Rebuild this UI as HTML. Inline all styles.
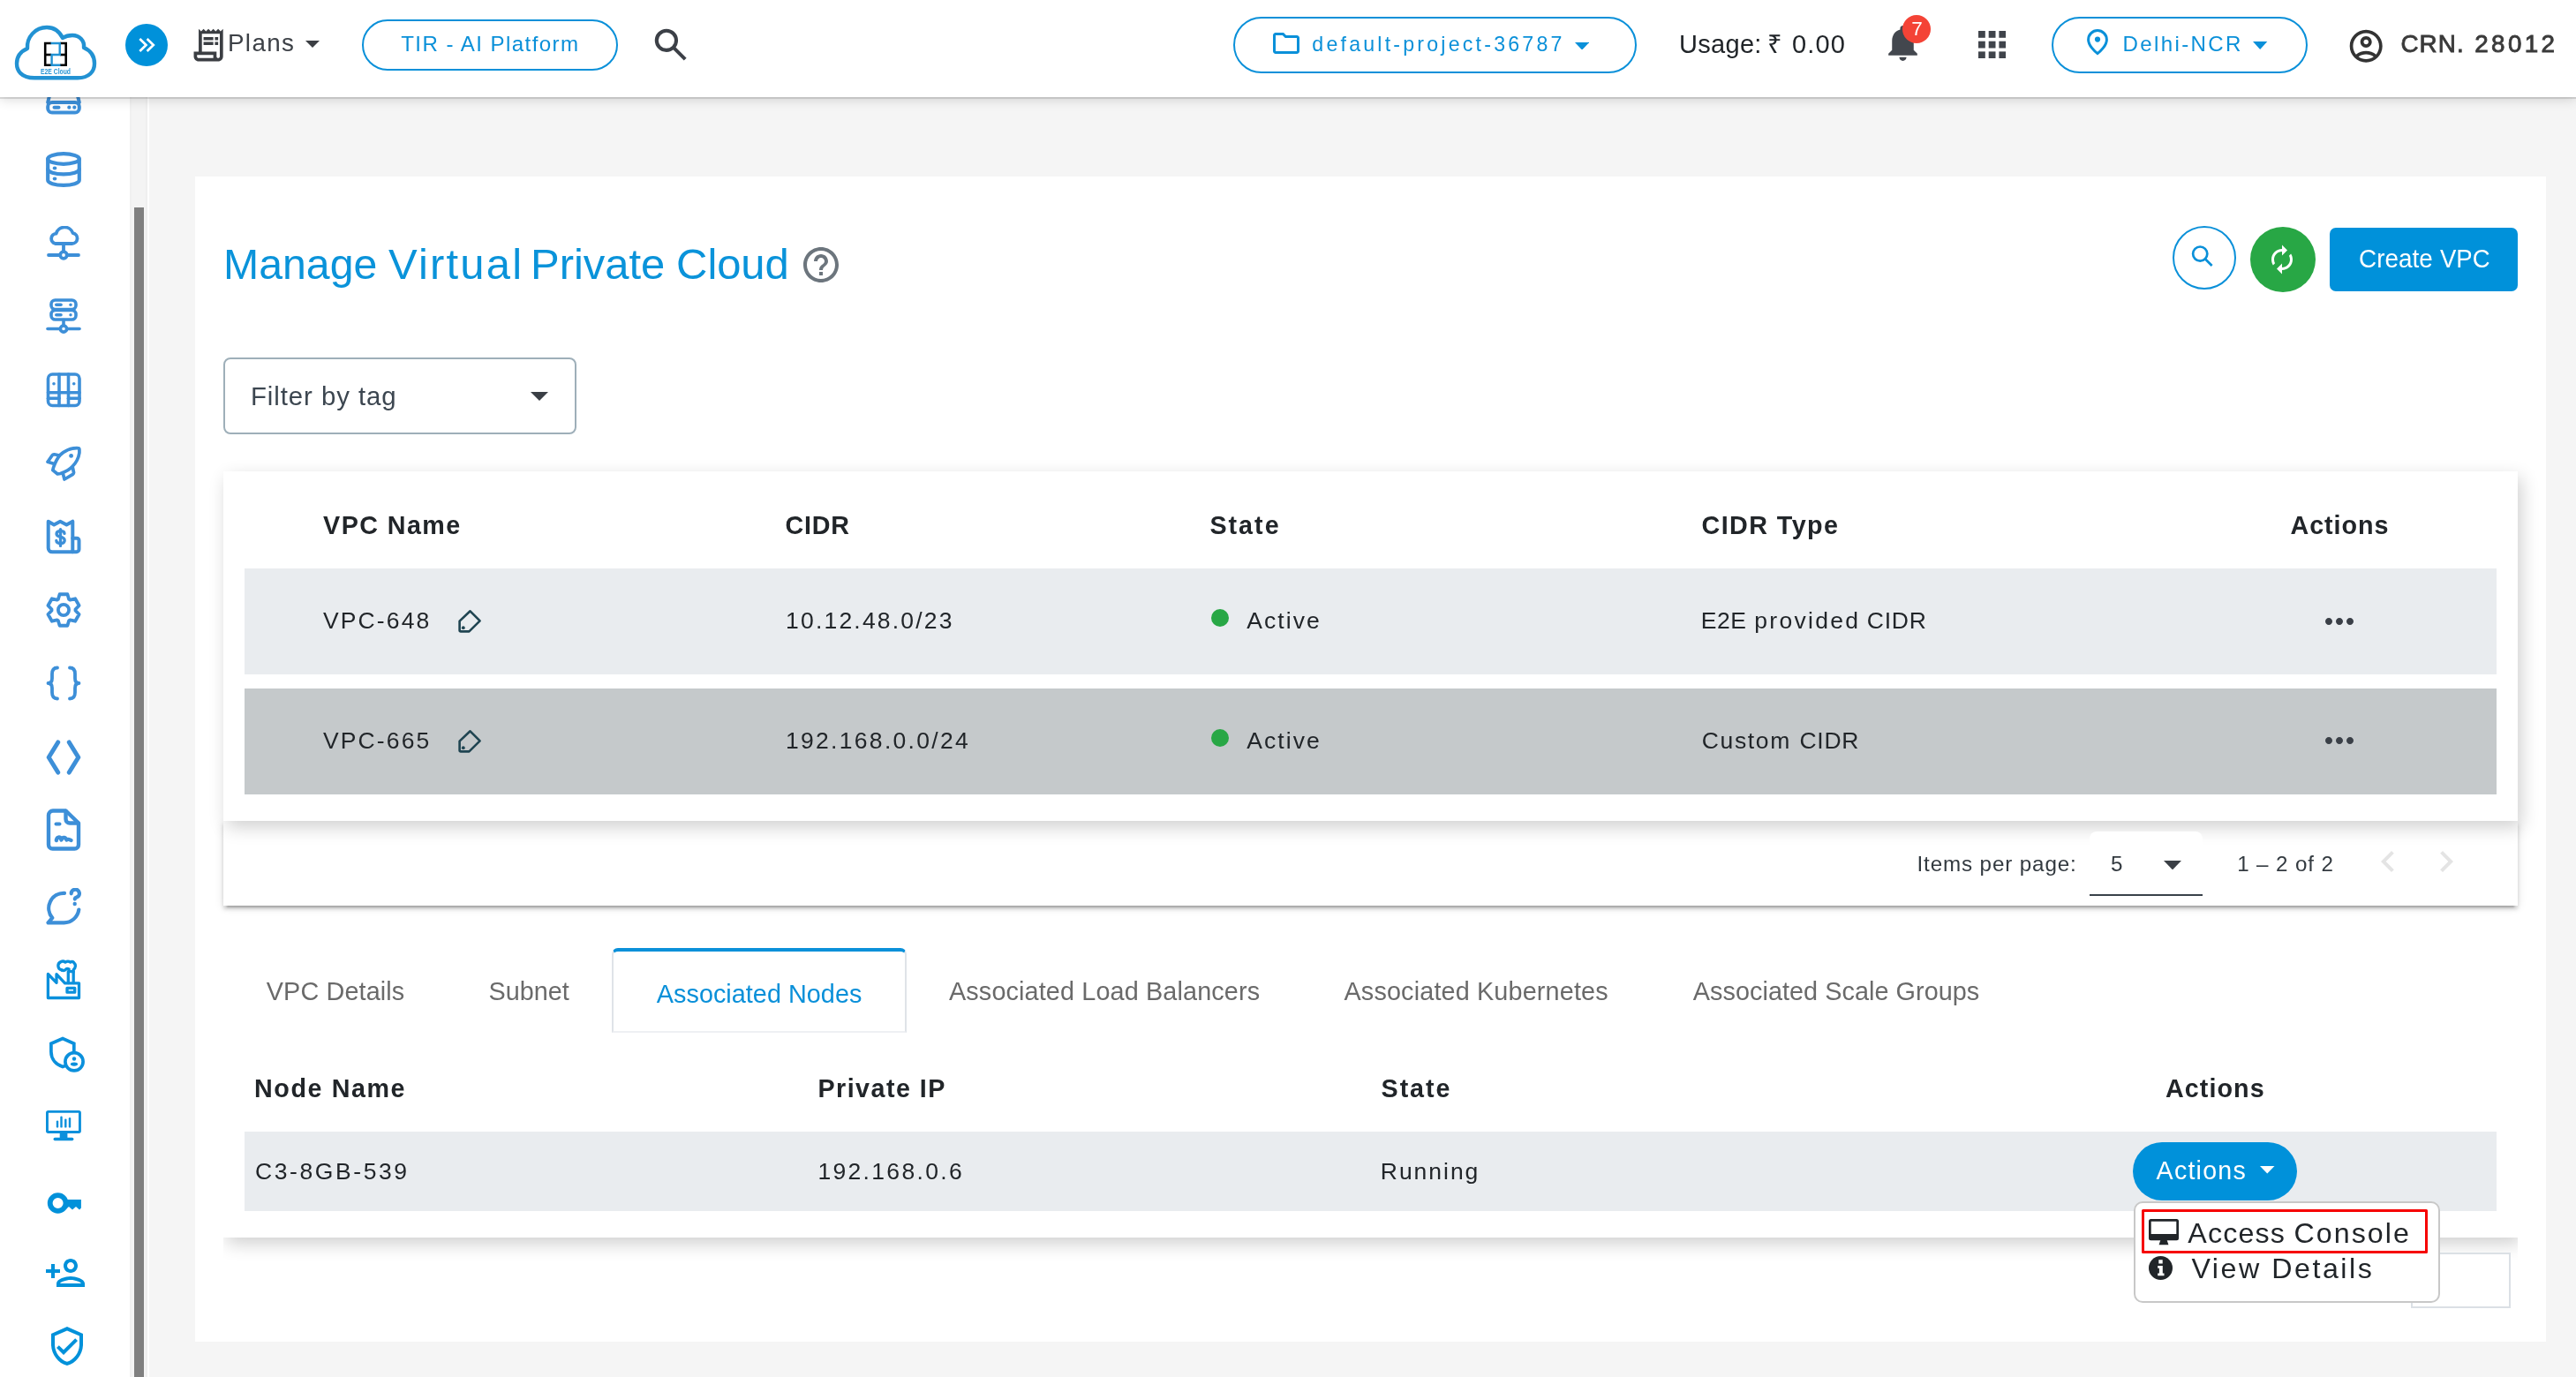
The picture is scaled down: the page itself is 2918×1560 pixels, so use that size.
<!DOCTYPE html>
<html><head><meta charset="utf-8"><title>Manage Virtual Private Cloud</title>
<style>
html,body{margin:0;padding:0}
body{width:2918px;height:1560px;overflow:hidden;position:relative;background:#f5f5f5;
 font-family:"Liberation Sans",sans-serif;}
div,svg{box-sizing:border-box}
#root{position:absolute;left:0;top:0;width:2918px;height:1560px;overflow:hidden;transform:translateZ(0)}
.a{position:absolute}
.t{position:absolute;line-height:1;white-space:pre}
.pill{position:absolute;border:2.2px solid #0a90d9;border-radius:40px;background:#fff}
.row{position:absolute;left:277px;width:2551px}
.card{position:absolute;left:253px;width:2599px;background:#fff}
</style></head>
<body>
<div id="root">
<div class="a" style="left:0px;top:110px;width:147px;height:1450px;background:#fff"></div>
<div class="a" style="left:147px;top:110px;width:20px;height:1450px;background:#f4f4f4;border-left:2px solid #f0f0f0;border-right:2px solid #efefef"></div>
<div class="a" style="left:167px;top:110px;width:2.3px;height:1450px;background:#fff"></div>
<div class="a" style="left:151.5px;top:235px;width:11.5px;height:1325px;background:#808080"></div>
<svg style="position:absolute;left:52px;top:89.5px;color:#3d8fd8;" width="40" height="40" viewBox="0 0 40 40"><g fill="none" stroke="currentColor" stroke-width="4" stroke-linecap="round" stroke-linejoin="round"><path d="M8 2 L2.2 26"/><path d="M32 2 L37.8 26"/><rect x="2.2" y="26" width="35.600" height="11.500" rx="4.800"/><path d="M9.500 31.700H14.500" stroke-width="4"/></g><circle cx="26.300" cy="31.700" r="2.100" fill="currentColor"/><circle cx="32.300" cy="31.700" r="2.100" fill="currentColor"/></svg>
<svg style="position:absolute;left:52px;top:172px;color:#3d8fd8;" width="40" height="40" viewBox="0 0 40 40"><g fill="none" stroke="currentColor" stroke-width="4.2" stroke-linecap="round" stroke-linejoin="round"><ellipse cx="20" cy="8" rx="17.800" ry="5.800"/><path d="M2.200 8V32C2.200 35.300 10 37.800 20 37.800S37.800 35.300 37.800 32V8"/><path d="M2.200 19.500C2.200 22.800 10 25.300 20 25.300S37.800 22.800 37.800 19.500"/></g><ellipse cx="10" cy="18.500" rx="2.300" ry="1.900" fill="currentColor"/><ellipse cx="10" cy="30.500" rx="2.300" ry="1.900" fill="currentColor"/></svg>
<svg style="position:absolute;left:52px;top:255.5px;color:#3d8fd8;" width="40" height="40" viewBox="0 0 40 40"><g fill="none" stroke="currentColor" stroke-width="3.8" stroke-linecap="round" stroke-linejoin="round"><path d="M10.500 20H29.500A6 6 0 0 0 30.600 8.100A10 10 0 0 0 11.600 8.600A5.800 5.800 0 0 0 10.500 20Z"/><path d="M20 20V28.500"/><circle cx="20" cy="33" r="3.800"/><path d="M3 33H15.500"/><path d="M24.500 33H37"/></g></svg>
<svg style="position:absolute;left:52px;top:338px;color:#3d8fd8;" width="40" height="40" viewBox="0 0 40 40"><g fill="none" stroke="currentColor" stroke-width="3.6" stroke-linecap="round" stroke-linejoin="round"><rect x="6" y="2" width="28" height="10.500" rx="4.500"/><rect x="6" y="13.500" width="28" height="10.500" rx="4.500"/><path d="M11.800 7.200H17" stroke-width="3.600"/><path d="M11.800 18.800H17" stroke-width="3.600"/><path d="M20 24.500V30"/><circle cx="20" cy="34.500" r="3.600"/><path d="M2 34.500H16"/><path d="M24 34.500H38"/></g><circle cx="28" cy="7.200" r="1.700" fill="currentColor"/><circle cx="28" cy="18.800" r="1.700" fill="currentColor"/></svg>
<svg style="position:absolute;left:51.9px;top:422px;color:#3d8fd8;" width="40" height="40" viewBox="0 0 40 40"><g fill="none" stroke="currentColor" stroke-width="3.6" stroke-linecap="round" stroke-linejoin="round"><rect x="2.500" y="2" width="35.500" height="35.500" rx="5"/><path d="M15 2V37.500"/><path d="M25.500 2V37.500"/><path d="M2.500 22.800H38"/><path d="M2.500 29.300H15"/><path d="M25.500 29.300H38"/></g><circle cx="9" cy="12.700" r="1.800" fill="currentColor"/><circle cx="31.700" cy="12.700" r="1.800" fill="currentColor"/></svg>
<svg style="position:absolute;left:52px;top:505px;color:#3d8fd8;" width="40" height="40" viewBox="0 0 40 40"><g fill="none" stroke="currentColor" stroke-width="3.7" stroke-linecap="round" stroke-linejoin="round"><path d="M36 2.600C28 2.200 21 6 16 10.500C13 14 10.500 19 8.600 24.500L7.800 27.600L13.200 32L16.500 31.500C22 29.500 27 27 30 23.500C34 19.500 37 14 37.900 8L37.900 4.500Q37.900 2.600 36 2.600Z"/><path d="M15.500 11L9.500 9.800Q8 9.600 7.200 10.800L2 18.200L9.500 20.500"/><path d="M30.300 24.500L31.500 30Q31.800 31.500 30.500 32.300L21 38L19.200 31"/></g><circle cx="28.600" cy="11.400" r="2.400" fill="currentColor"/></svg>
<svg style="position:absolute;left:52px;top:587.5px;color:#3d8fd8;" width="40" height="40" viewBox="0 0 40 40"><g fill="none" stroke="currentColor" stroke-width="4" stroke-linecap="round" stroke-linejoin="round"><path d="M2.700 2.700L9.200 6.500L16.200 2.700L23.400 6.500L30.300 2.700V37.300H7A4.300 4.300 0 0 1 2.700 33Z"/><path d="M30.300 21.800H35A2.500 2.500 0 0 1 37.500 24.300V34.300A3 3 0 0 1 34.500 37.300H30"/></g><g fill="none" stroke="currentColor" stroke-width="3.3" stroke-linecap="round" stroke-linejoin="round"><path d="M16.500 11.600V30.400"/><path d="M21 16.400C21 14.400 19 13.600 16.500 13.600S12 14.700 12 16.900S14.200 19.600 16.500 20.200S21.200 21.700 21.200 24.200S19.100 27.500 16.500 27.500S11.800 26.500 11.800 24.500"/></g></svg>
<svg style="position:absolute;left:52.1px;top:671.2px;color:#3d8fd8;" width="40" height="40" viewBox="0 0 40 40"><g fill="none" stroke="currentColor" stroke-width="3.8" stroke-linecap="round" stroke-linejoin="round"><path d="M26.13 7.97 L24.43 2.24 L15.57 2.24 L13.87 7.97 L12.65 8.68 L6.84 7.29 L2.41 14.96 L6.52 19.29 L6.52 20.71 L2.41 25.04 L6.84 32.71 L12.65 31.32 L13.87 32.03 L15.57 37.76 L24.43 37.76 L26.13 32.03 L27.35 31.32 L33.16 32.71 L37.59 25.04 L33.48 20.71 L33.48 19.29 L37.59 14.96 L33.16 7.29 L27.35 8.68Z"/><circle cx="20" cy="20" r="6.100"/></g></svg>
<svg style="position:absolute;left:52.2px;top:753.5px;color:#3d8fd8;" width="40" height="40" viewBox="0 0 40 40"><g fill="none" stroke="currentColor" stroke-width="3.8" stroke-linecap="round" stroke-linejoin="round"><path d="M13 2.500C8.800 2.500 7 4.800 7 9.500V14.500C7 18 5.500 20 2.500 20C5.500 20 7 22 7 25.500V30.500C7 35.200 8.800 37.500 13 37.500"/><path d="M27 2.500C31.200 2.500 33 4.800 33 9.500V14.500C33 18 34.500 20 37.500 20C34.500 20 33 22 33 25.500V30.500C33 35.200 31.200 37.500 27 37.500"/></g></svg>
<svg style="position:absolute;left:52.4px;top:838.3px;color:#3d8fd8;" width="40" height="40" viewBox="0 0 40 40"><g fill="none" stroke="currentColor" stroke-width="5" stroke-linecap="round" stroke-linejoin="round"><path d="M13.700 3L3.200 20L13.700 37"/><path d="M26.300 3L36.800 20L26.300 37"/></g></svg>
<svg style="position:absolute;left:52px;top:916.2px;color:#3d8fd8;" width="40" height="48" viewBox="0 0 40 48"><g fill="none" stroke="currentColor" stroke-width="4.4" stroke-linecap="round" stroke-linejoin="round"><path d="M8 2.500H22.500L37 16.500V41A4.500 4.500 0 0 1 32.500 45.500H7.500A4.500 4.500 0 0 1 3 41V7.500A5 5 0 0 1 8 2.500Z"/><path d="M22.500 3V12A4.500 4.500 0 0 0 27 16.500H36.500"/><path d="M11.500 17.500H15.500" stroke-width="4"/><path d="M11.800 36C12.500 32 16 31 17.500 35.500C19 31.500 22 32.500 23.500 35.500C25 34.500 27 35 28.500 36"/></g></svg>
<svg style="position:absolute;left:52px;top:1006px;color:#3d8fd8;" width="40" height="42" viewBox="0 0 40 42"><g fill="none" stroke="currentColor" stroke-width="4.2" stroke-linecap="round" stroke-linejoin="round"><path d="M21 5.800A17 17 0 0 0 7.300 33.800L2.500 39.300H20A17 17 0 0 0 37.300 24.500"/><path d="M28.700 6.300A4.600 4.600 0 1 1 34.800 10.600C33.300 11.100 32.800 11.800 32.800 12.600"/></g><circle cx="32.700" cy="18" r="2.200" fill="currentColor"/></svg>
<svg style="position:absolute;left:52px;top:1087px;color:#0b90dc;" width="40" height="46" viewBox="0 0 40 46"><g fill="none" stroke="currentColor" stroke-width="3.3" stroke-linecap="round" stroke-linejoin="round"><path d="M2.400 43.500V16.500L12 26.300V16.700L21.500 26.800H37.500V43.500Z"/><path d="M25.300 26.500V13.700H31.200V26.500"/><rect x="24" y="32.400" width="8.700" height="4.800"/><path d="M18 12A4.900 4.900 0 0 1 17 2.600Q19.500 1.200 22 3.100Q25 1.200 27.800 3.100Q30 1.300 31.800 3.700A5 5 0 0 1 31.200 11.500V14"/><path d="M18 12Q20.500 13.300 22.500 11.300Q24 9.900 26.200 11"/></g></svg>
<svg style="position:absolute;left:54px;top:1173.5px;color:#0b90dc;" width="42" height="42" viewBox="0 0 42 42"><g fill="none" stroke="currentColor" stroke-width="3.7" stroke-linecap="butt" stroke-linejoin="miter"><path d="M29.800 17.500V8.300L17 2.500L3.900 8.300V17.500C3.900 26 9.500 32 17 34.500C18.300 34.100 19.500 33.600 20.500 33"/><circle cx="30" cy="28.800" r="10.100"/></g><circle cx="30" cy="25.500" r="2.200" fill="currentColor"/><ellipse cx="30" cy="31.600" rx="4.100" ry="2.100" fill="currentColor"/></svg>
<svg style="position:absolute;left:52px;top:1256px;color:#0b90dc;" width="40" height="40" viewBox="0 0 40 40"><g fill="none" stroke="currentColor" stroke-width="2.9" stroke-linecap="butt" stroke-linejoin="round"><rect x="1.450" y="3.350" width="37" height="23.200" rx="1.300"/></g><path d="M15.700 27.500H24.400V33H15.700Z" fill="currentColor"/><rect x="8.500" y="32.700" width="22.900" height="3.500" rx="1.700" fill="currentColor"/><g fill="none" stroke="currentColor" stroke-width="2.4" stroke-linecap="round" stroke-linejoin="round"><path d="M13 14.600V20.400"/><path d="M17.500 9.800V20.400"/><path d="M22.300 12.600V20.400"/><path d="M27 11.300V20.400"/></g></svg>
<svg style="position:absolute;left:44px;top:1335px;color:#0091da;" width="60" height="55" viewBox="0 0 60 55"><path fill="currentColor" fill-rule="evenodd" d="M21.600 16.200A11.800 11.800 0 1 0 21.600 39.800A11.800 11.800 0 1 0 21.600 16.200ZM21.600 22A6 6 0 1 1 21.600 34A6 6 0 1 1 21.600 22Z"/><path fill="currentColor" d="M31 24H47.900V33.500L46 35.600L42 32L38 35.600L34 32L31 34.500Z"/></svg>
<svg style="position:absolute;left:49.8px;top:1418.1px;color:#0091da;" width="48" height="48" viewBox="0 0 24 24"><path fill="currentColor" d="M15 12c2.21 0 4-1.79 4-4s-1.79-4-4-4-4 1.79-4 4 1.79 4 4 4zm0-6c1.1 0 2 .9 2 2s-.9 2-2 2-2-.9-2-2 .9-2 2-2zm0 8c-2.67 0-8 1.34-8 4v2h16v-2c0-2.66-5.33-4-8-4zm-6 4c.22-.72 3.31-2 6-2 2.7 0 5.8 1.29 6 2H9zm-3-3v-3h3v-2H6V7H4v3H1v2h3v3z"/></svg>
<svg style="position:absolute;left:51.6px;top:1501.3px;color:#0091da;" width="48" height="48" viewBox="0 0 24 24"><path fill="currentColor" d="M12 1L3 5v6c0 5.55 3.84 10.74 9 12 5.16-1.26 9-6.45 9-12V5l-9-4zm7 10c0 4.52-2.98 8.69-7 9.93-4.02-1.24-7-5.41-7-9.93V6.3l7-3.11 7 3.11V11zm-11.59.59L6 13l4 4 8-8-1.41-1.42L10 14.17z"/></svg>
<div class="a" style="left:221px;top:200px;width:2663px;height:1320px;background:#fff"></div>
<svg style="position:absolute;left:906.4px;top:276.2px;color:#6c757d;" width="48" height="48" viewBox="0 0 24 24"><path fill="currentColor" d="M11 18h2v-2h-2v2zm1-16C6.48 2 2 6.48 2 12s4.48 10 10 10 10-4.48 10-10S17.52 2 12 2zm0 18c-4.41 0-8-3.59-8-8s3.59-8 8-8 8 3.59 8 8-3.59 8-8 8zm0-14c-2.21 0-4 1.79-4 4h2c0-1.1.9-2 2-2s2 .9 2 2c0 2-3 1.75-3 5h2c0-2.25 3-2.5 3-5 0-2.21-1.79-4-4-4z"/></svg>
<div class="a" style="left:253px;top:405px;width:399.5px;height:86.5px;border:2px solid #9eafb9;border-radius:8px;background:#fff"></div>
<svg style="position:absolute;left:601px;top:443.7px;" width="20" height="10" viewBox="0 0 20 10"><path fill="#3a3f45" d="M0 0H20L10.0 10Z"/></svg>
<div class="a" style="left:2461px;top:256px;width:72px;height:72px;border:2px solid #0a90d9;border-radius:50%;background:#fff"></div>
<svg style="position:absolute;left:2470px;top:270px;color:#0a90d9;" width="50" height="40" viewBox="0 0 50 40"><g fill="none" stroke="currentColor" stroke-width="2.7" stroke-linecap="butt" stroke-linejoin="round"><circle cx="22.200" cy="17.600" r="8.100"/><path d="M28.100 23.500L35.600 31"/></g></svg>
<div class="a" style="left:2549px;top:257px;width:74px;height:74px;border-radius:50%;background:#28a745"></div>
<svg style="position:absolute;left:2567.3px;top:276.2px;color:#fff;" width="36" height="36" viewBox="0 0 24 24"><path fill="currentColor" d="M12 6v3l4-4-4-4v3c-4.42 0-8 3.58-8 8 0 1.57.46 3.03 1.24 4.26L6.7 14.8c-.45-.83-.7-1.79-.7-2.8 0-3.31 2.69-6 6-6zm6.76 1.74L17.3 9.2c.44.84.7 1.79.7 2.8 0 3.31-2.69 6-6 6v-3l-4 4 4 4v-3c4.42 0 8-3.58 8-8 0-1.57-.46-3.03-1.24-4.26z"/></svg>
<div class="a" style="left:2639px;top:258px;width:213px;height:72px;border-radius:7px;background:#0091da"></div>
<div class="a" style="left:253px;top:930px;width:2599px;height:96px;background:#fff;box-shadow:0 6px 2px -4px rgba(0,0,0,.2),0 4px 4px 0 rgba(0,0,0,.14),0 2px 10px 0 rgba(0,0,0,.12)"></div>
<div class="card" style="top:534px;height:396px;box-shadow:4px 7px 19px rgba(0,0,0,.19)"></div>
<div class="row" style="top:644px;height:120px;background:#e9ecef"></div>
<div class="row" style="top:780px;height:120px;background:#c5c9cb"></div>
<div class="a" style="left:1372.3px;top:690px;width:20px;height:20px;border-radius:50%;background:#28a745"></div>
<div class="a" style="left:1372.3px;top:826px;width:20px;height:20px;border-radius:50%;background:#28a745"></div>
<svg style="position:absolute;left:2626.4px;top:679.8px;color:#3a3f47;" width="48" height="48" viewBox="0 0 24 24"><path fill="currentColor" d="M6 10c-1.1 0-2 .9-2 2s.9 2 2 2 2-.9 2-2-.9-2-2-2zm12 0c-1.1 0-2 .9-2 2s.9 2 2 2 2-.9 2-2-.9-2-2-2zm-6 0c-1.1 0-2 .9-2 2s.9 2 2 2 2-.9 2-2-.9-2-2-2z"/></svg>
<svg style="position:absolute;left:2626.4px;top:815.3px;color:#3a3f47;" width="48" height="48" viewBox="0 0 24 24"><path fill="currentColor" d="M6 10c-1.1 0-2 .9-2 2s.9 2 2 2 2-.9 2-2-.9-2-2-2zm12 0c-1.1 0-2 .9-2 2s.9 2 2 2 2-.9 2-2-.9-2-2-2zm-6 0c-1.1 0-2 .9-2 2s.9 2 2 2 2-.9 2-2-.9-2-2-2z"/></svg>
<svg style="position:absolute;left:517.6px;top:690px;color:#1f4451;" width="28" height="28" viewBox="0 0 28 28"><path d="M2.6 24.2V13.6L14.6 2.3L25.6 13.3L13.4 25.4H3.8C3.1 25.4 2.6 24.9 2.6 24.2Z" fill="none" stroke="currentColor" stroke-width="2.6" stroke-linejoin="round"/><circle cx="6.800" cy="21.200" r="1.900" fill="currentColor"/></svg>
<svg style="position:absolute;left:517.6px;top:826px;color:#1f4451;" width="28" height="28" viewBox="0 0 28 28"><path d="M2.6 24.2V13.6L14.6 2.3L25.6 13.3L13.4 25.4H3.8C3.1 25.4 2.6 24.9 2.6 24.2Z" fill="none" stroke="currentColor" stroke-width="2.6" stroke-linejoin="round"/><circle cx="6.800" cy="21.200" r="1.900" fill="currentColor"/></svg>
<div class="a" style="left:2367px;top:942px;width:128px;height:72.5px;background:#fff;border-radius:8px 8px 0 0;border-bottom:2px solid #39424a"></div>
<svg style="position:absolute;left:2451.3px;top:974.7px;" width="20" height="10.4" viewBox="0 0 20 10.4"><path fill="#3a3f45" d="M0 0H20L10.0 10.4Z"/></svg>
<svg style="position:absolute;left:2681px;top:952px;color:#e4e4e4;" width="48" height="48" viewBox="0 0 24 24"><path fill="currentColor" d="M15.41 7.41L14 6l-6 6 6 6 1.41-1.41L10.83 12z"/></svg>
<svg style="position:absolute;left:2746.5px;top:952px;color:#e4e4e4;" width="48" height="48" viewBox="0 0 24 24"><path fill="currentColor" d="M10 6L8.59 7.41 13.17 12l-4.58 4.59L10 18l6-6z"/></svg>
<div class="a" style="left:693.3px;top:1073.7px;width:333.6px;height:96.2px;border:2px solid #dfe3e8;border-bottom:2px solid #eef0f3;border-top:4.300px solid #0a90d9;border-radius:7px 7px 0 0;background:#fff"></div>
<div class="a" style="left:253px;top:1180px;width:2599px;height:280px;overflow:hidden"><div class="a" style="left:0;top:0;width:2599px;height:222px;background:#fff;box-shadow:4px 7px 19px rgba(0,0,0,.19)"></div></div>
<div class="row" style="top:1282px;height:89.700px;background:#e9ecef"></div>
<div class="a" style="left:2731px;top:1418.5px;width:113px;height:63px;border:2px solid #dbe0e5;background:#fff"></div>
<div class="a" style="left:2416px;top:1294px;width:186px;height:66px;border-radius:33px;background:#0091da"></div>
<svg style="position:absolute;left:2560px;top:1321.2px;" width="16.5" height="8.4" viewBox="0 0 16.5 8.4"><path fill="#fff" d="M0 0H16.5L8.25 8.4Z"/></svg>
<div class="a" style="left:2416.5px;top:1360.5px;width:347px;height:115px;border:2px solid #c8c8c8;border-radius:10px;background:#fff"></div>
<div class="a" style="left:2426.2px;top:1370.4px;width:324px;height:49.2px;border:3.600px solid #f60000;border-radius:1.5px"></div>
<svg style="position:absolute;left:2434px;top:1380.8px;color:#212529;" width="34" height="30" viewBox="0 0 34 30"><path fill="currentColor" fill-rule="evenodd" d="M2.500 0H31.500A2.500 2.500 0 0 1 34 2.500V21.700A2.500 2.500 0 0 1 31.500 24.200H2.500A2.500 2.500 0 0 1 0 21.700V2.500A2.500 2.500 0 0 1 2.500 0ZM2.700 2.800V17.100H31.300V2.800Z"/><path fill="currentColor" d="M13.300 24H20.700L22.400 29.300H11.600Z"/></svg>
<svg style="position:absolute;left:2434px;top:1423px;color:#212529;" width="27" height="27" viewBox="0 0 27 27"><circle cx="13.5" cy="13.5" r="13.5" fill="currentColor"/><path fill="#fff" d="M11.300 4.300h4.400v4.200h-4.400z M10.200 10.900h5.600v8.500h1.700v2.900h-7.300v-2.900h1.700v-5.600h-1.700z"/></svg>
<div class="a" style="left:0px;top:0px;width:2918px;height:110px;background:#fff;box-shadow:0 2px 0 rgba(0,0,0,.12),0 2px 13px rgba(0,0,0,.17)"></div>
<svg style="position:absolute;left:0px;top:0px;" width="126" height="110" viewBox="0 0 126 110"><path d="M39 88.3 C24 88.3 19 80 19 72 C19 64 24 58 31 55 C30 42 40 31 53 31 C61 31 67 35 71 43 C74 41 78 40 82 40 C90 40 96 46 95 54 C102 57 107 63 107 72 C107 81 101 88.3 88 88.3 Z" fill="none" stroke="#2292d3" stroke-width="4.4" stroke-linejoin="round"/><g fill="none" stroke="#000" stroke-width="2.6"><path d="M58 49H51.2V73.7H58"/><path d="M68 49H74.7V73.7H68"/><path d="M50 62H58"/><path d="M68 62H76"/></g><g fill="none" stroke="#2292d3" stroke-width="2.4"><path d="M57.5 49H67.7V62H58.6V73.7H68.5"/></g><text x="63" y="84" text-anchor="middle" font-family="Liberation Sans" font-weight="700" font-size="8.7" fill="#2a96d5" textLength="34" lengthAdjust="spacingAndGlyphs">E2E Cloud</text></svg>
<div style="position:absolute;left:142px;top:27px;width:48px;height:48px;border-radius:50%;background:#0091da"></div><svg style="position:absolute;left:0px;top:0px;color:#fff;" width="200" height="110" viewBox="0 0 200 110"><g fill="none" stroke="currentColor" stroke-width="2.7" stroke-linecap="butt" stroke-linejoin="miter"><path d="M158.3 44 L165.5 51 L158.3 58"/><path d="M166.6 44 L173.8 51 L166.6 58"/></g></svg>
<svg style="position:absolute;left:213.7px;top:29.2px;color:#3b3e43;" width="44.2" height="44.2" viewBox="0 0 24 24"><path fill="currentColor" d="M19.5 3.5L18 2l-1.5 1.5L15 2l-1.5 1.5L12 2l-1.5 1.5L9 2 7.5 3.5 6 2v14H3v3c0 1.66 1.34 3 3 3h12c1.66 0 3-1.34 3-3V2l-1.5 1.5zM15 20H6c-.55 0-1-.45-1-1v-1h10v2zm4-1c0 .55-.45 1-1 1s-1-.45-1-1v-3H8V5h11v14z M9 7h6v2H9z M16 7h2v2h-2z M9 10h6v2H9z M16 10h2v2h-2z"/></svg>
<svg style="position:absolute;left:345.8px;top:45.8px;" width="16" height="8" viewBox="0 0 16 8"><path fill="#3b3e43" d="M0 0H16L8.0 8Z"/></svg>
<div class="pill" style="left:410px;top:22px;width:290px;height:58px"></div>
<svg style="position:absolute;left:730px;top:20px;color:#3c4047;" width="60" height="60" viewBox="0 0 60 60"><g fill="none" stroke="currentColor" stroke-width="4.1" stroke-linecap="butt" stroke-linejoin="round"><circle cx="24.900" cy="25.800" r="11.100"/><path d="M32.700 33.600L46.200 47.100"/></g></svg>
<div class="pill" style="left:1397px;top:19px;width:457px;height:64px"></div>
<svg style="position:absolute;left:1438.7px;top:30.9px;color:#0a90d9;" width="36" height="36" viewBox="0 0 24 24"><path fill="currentColor" d="M9.17 6l2 2H20v10H4V6h5.17M10 4H4c-1.1 0-1.99.9-1.99 2L2 18c0 1.1.9 2 2 2h16c1.1 0 2-.9 2-2V8c0-1.1-.9-2-2-2h-8l-2-2z"/></svg>
<svg style="position:absolute;left:1784.1px;top:47.6px;" width="16.2" height="8.6" viewBox="0 0 16.2 8.6"><path fill="#0a90d9" d="M0 0H16.2L8.1 8.6Z"/></svg>
<svg style="position:absolute;left:2131px;top:24px;color:#43474e;" width="49" height="49" viewBox="0 0 24 24"><path fill="currentColor" d="M12 22c1.1 0 2-.9 2-2h-4c0 1.1.89 2 2 2zm6-6v-5c0-3.07-1.64-5.64-4.5-6.32V4c0-.83-.67-1.5-1.5-1.5s-1.5.67-1.5 1.5v.68C7.63 5.36 6 7.92 6 11v5l-2 2v1h16v-1l-2-2z"/></svg>
<div class="a" style="left:2155px;top:17px;width:32px;height:32px;border-radius:50%;background:#f44336"></div>
<svg style="position:absolute;left:2241px;top:34.6px;" width="31.2" height="31.2" viewBox="0 0 32 32"><g fill="#40444b"><rect x="0" y="0" width="8" height="8"/><rect x="12" y="0" width="8" height="8"/><rect x="24" y="0" width="8" height="8"/><rect x="0" y="12" width="8" height="8"/><rect x="12" y="12" width="8" height="8"/><rect x="24" y="12" width="8" height="8"/><rect x="0" y="24" width="8" height="8"/><rect x="12" y="24" width="8" height="8"/><rect x="24" y="24" width="8" height="8"/></g></svg>
<div class="pill" style="left:2324px;top:19px;width:290px;height:64px"></div>
<svg style="position:absolute;left:2364px;top:33.3px;color:#0a90d9;" width="24" height="30" viewBox="0 0 24 30"><path d="M12 1.6C6.3 1.6 1.6 6.2 1.6 11.9c0 6.6 7.4 13.4 10.4 15.7c3-2.3 10.4-9.1 10.4-15.7C22.4 6.2 17.7 1.6 12 1.6z" fill="none" stroke="currentColor" stroke-width="3"/><circle cx="12" cy="11.6" r="3.1" fill="currentColor"/></svg>
<svg style="position:absolute;left:2552.4px;top:46.8px;" width="16.3" height="8.9" viewBox="0 0 16.3 8.9"><path fill="#0a90d9" d="M0 0H16.3L8.15 8.9Z"/></svg>
<svg style="position:absolute;left:2658.1px;top:29.6px;color:#333;" width="44.4" height="44.4" viewBox="0 0 24 24"><path fill="currentColor" d="M12 2C6.48 2 2 6.48 2 12s4.48 10 10 10 10-4.48 10-10S17.52 2 12 2zM7.35 18.5C8.66 17.56 10.26 17 12 17s3.34.56 4.65 1.5c-1.31.94-2.91 1.5-4.65 1.5s-3.34-.56-4.65-1.5zm10.79-1.38C16.45 15.8 14.32 15 12 15s-4.45.8-6.14 2.12C4.7 15.73 4 13.95 4 12c0-4.42 3.58-8 8-8s8 3.58 8 8c0 1.95-.7 3.73-1.86 5.12z M12 6c-1.93 0-3.5 1.57-3.5 3.5S10.07 13 12 13s3.5-1.57 3.5-3.5S13.93 6 12 6zm0 5c-.83 0-1.5-.67-1.5-1.5S11.17 8 12 8s1.5.67 1.5 1.5S12.83 11 12 11z"/></svg>
<div><span class="t" style="left:258.0px;top:35px;font-size:27.8px;letter-spacing:1.33px;color:#3d4147;">Plans</span></div>
<div><span class="t" style="left:454.2px;top:38px;font-size:24.1px;letter-spacing:1.43px;color:#0a90d9;">TIR - AI Platform</span></div>
<div><span class="t" style="left:1486.3px;top:39px;font-size:23.2px;letter-spacing:3.20px;color:#0a90d9;">default-project-36787</span></div>
<div><span class="t" style="left:1902.1px;top:36px;font-size:29.0px;letter-spacing:0.28px;color:#212529;">Usage:</span> <span class="t" style="left:2002.0px;top:36px;font-size:29.0px;letter-spacing:0.00px;color:#212529;">₹</span> <span class="t" style="left:2029.9px;top:36px;font-size:29.0px;letter-spacing:1.20px;color:#212529;">0.00</span></div>
<div><span class="t" style="left:2165.2px;top:22px;font-size:22.6px;letter-spacing:0.00px;color:#fff;">7</span></div>
<div><span class="t" style="left:2404.6px;top:38px;font-size:24.1px;letter-spacing:2.34px;color:#0a90d9;">Delhi-NCR</span></div>
<div><span class="t" style="left:2719.4px;top:36px;font-size:27.8px;letter-spacing:1.10px;color:#3a3a3a;-webkit-text-stroke:0.85px #3a3a3a;">CRN.</span> <span class="t" style="left:2803.2px;top:36px;font-size:27.8px;letter-spacing:3.40px;color:#3a3a3a;-webkit-text-stroke:0.85px #3a3a3a;">28012</span></div>
<div><span class="t" style="left:252.9px;top:275px;font-size:49.0px;letter-spacing:0.00px;color:#0a93da;transform:scaleX(0.9842);transform-origin:0 0;">Manage</span> <span class="t" style="left:440.0px;top:275px;font-size:49.0px;letter-spacing:2.17px;color:#0a93da;">Virtual</span> <span class="t" style="left:601.0px;top:275px;font-size:49.0px;letter-spacing:-0.05px;color:#0a93da;">Private</span> <span class="t" style="left:766.1px;top:275px;font-size:49.0px;letter-spacing:-0.10px;color:#0a93da;">Cloud</span></div>
<div><span class="t" style="left:284.0px;top:434px;font-size:29.4px;letter-spacing:0.92px;color:#3c4650;">Filter by tag</span></div>
<div><span class="t" style="left:2671.9px;top:278px;font-size:29.3px;letter-spacing:0.00px;color:#fff;transform:scaleX(0.9523);transform-origin:0 0;">Create</span> <span class="t" style="left:2763.7px;top:278px;font-size:29.3px;letter-spacing:0.00px;color:#fff;transform:scaleX(0.9390);transform-origin:0 0;">VPC</span></div>
<div><span class="t" style="left:366.1px;top:581px;font-size:28.7px;letter-spacing:1.44px;color:#212529;font-weight:700;">VPC Name</span></div>
<div><span class="t" style="left:889.4px;top:581px;font-size:28.7px;letter-spacing:0.83px;color:#212529;font-weight:700;">CIDR</span></div>
<div><span class="t" style="left:1370.4px;top:581px;font-size:28.7px;letter-spacing:2.02px;color:#212529;font-weight:700;">State</span></div>
<div><span class="t" style="left:1927.5px;top:581px;font-size:28.7px;letter-spacing:1.44px;color:#212529;font-weight:700;">CIDR Type</span></div>
<div><span class="t" style="left:2594.5px;top:581px;font-size:28.7px;letter-spacing:0.95px;color:#212529;font-weight:700;">Actions</span></div>
<div><span class="t" style="left:366.0px;top:690px;font-size:26.5px;letter-spacing:2.12px;color:#212529;">VPC-648</span></div>
<div><span class="t" style="left:890.0px;top:690px;font-size:26.5px;letter-spacing:2.20px;color:#212529;">10.12.48.0/23</span></div>
<div><span class="t" style="left:1412.2px;top:690px;font-size:26.5px;letter-spacing:2.10px;color:#212529;">Active</span></div>
<div><span class="t" style="left:1926.7px;top:690px;font-size:26.5px;letter-spacing:0.60px;color:#212529;">E2E</span> <span class="t" style="left:1987.3px;top:690px;font-size:26.5px;letter-spacing:2.30px;color:#212529;">provided</span> <span class="t" style="left:2114.8px;top:690px;font-size:26.5px;letter-spacing:0.77px;color:#212529;">CIDR</span></div>
<div><span class="t" style="left:366.0px;top:826px;font-size:26.5px;letter-spacing:2.12px;color:#212529;">VPC-665</span></div>
<div><span class="t" style="left:890.0px;top:826px;font-size:26.5px;letter-spacing:2.30px;color:#212529;">192.168.0.0/24</span></div>
<div><span class="t" style="left:1412.2px;top:826px;font-size:26.5px;letter-spacing:2.10px;color:#212529;">Active</span></div>
<div><span class="t" style="left:1927.7px;top:826px;font-size:26.5px;letter-spacing:1.66px;color:#212529;">Custom</span> <span class="t" style="left:2038.4px;top:826px;font-size:26.5px;letter-spacing:0.77px;color:#212529;">CIDR</span></div>
<div><span class="t" style="left:2171.5px;top:967px;font-size:24.2px;letter-spacing:0.87px;color:#333a40;">Items per page:</span></div>
<div><span class="t" style="left:2391.0px;top:967px;font-size:24.2px;letter-spacing:0.00px;color:#333a40;">5</span></div>
<div><span class="t" style="left:2534.2px;top:967px;font-size:24.2px;letter-spacing:0.88px;color:#333a40;">1 – 2 of 2</span></div>
<div><span class="t" style="left:301.8px;top:1109px;font-size:28.8px;letter-spacing:0.12px;color:#6a6a6a;">VPC Details</span></div>
<div><span class="t" style="left:553.5px;top:1109px;font-size:28.8px;letter-spacing:0.02px;color:#6a6a6a;">Subnet</span></div>
<div><span class="t" style="left:743.8px;top:1112px;font-size:28.8px;letter-spacing:0.03px;color:#0a90d9;">Associated Nodes</span></div>
<div><span class="t" style="left:1075.0px;top:1109px;font-size:28.8px;letter-spacing:0.13px;color:#6a6a6a;">Associated Load Balancers</span></div>
<div><span class="t" style="left:1522.5px;top:1109px;font-size:28.8px;letter-spacing:0.15px;color:#6a6a6a;">Associated Kubernetes</span></div>
<div><span class="t" style="left:1917.8px;top:1109px;font-size:28.8px;letter-spacing:0.05px;color:#6a6a6a;">Associated Scale Groups</span></div>
<div><span class="t" style="left:288.0px;top:1219px;font-size:28.7px;letter-spacing:1.59px;color:#212529;font-weight:700;">Node Name</span></div>
<div><span class="t" style="left:926.4px;top:1219px;font-size:28.7px;letter-spacing:1.47px;color:#212529;font-weight:700;">Private IP</span></div>
<div><span class="t" style="left:1564.6px;top:1219px;font-size:28.7px;letter-spacing:1.90px;color:#212529;font-weight:700;">State</span></div>
<div><span class="t" style="left:2453.1px;top:1219px;font-size:28.7px;letter-spacing:1.05px;color:#212529;font-weight:700;">Actions</span></div>
<div><span class="t" style="left:289.0px;top:1314px;font-size:26.5px;letter-spacing:2.59px;color:#212529;">C3-8GB-539</span></div>
<div><span class="t" style="left:926.4px;top:1314px;font-size:26.5px;letter-spacing:2.33px;color:#212529;">192.168.0.6</span></div>
<div><span class="t" style="left:1563.8px;top:1314px;font-size:26.5px;letter-spacing:1.97px;color:#212529;">Running</span></div>
<div><span class="t" style="left:2442.6px;top:1312px;font-size:28.6px;letter-spacing:1.22px;color:#fff;">Actions</span></div>
<div><span class="t" style="left:2478.3px;top:1381px;font-size:32.2px;letter-spacing:1.16px;color:#212529;">Access</span> <span class="t" style="left:2598.6px;top:1381px;font-size:32.2px;letter-spacing:2.02px;color:#212529;">Console</span></div>
<div><span class="t" style="left:2482.4px;top:1421px;font-size:32.2px;letter-spacing:2.54px;color:#212529;">View Details</span></div>
</div>
</body></html>
